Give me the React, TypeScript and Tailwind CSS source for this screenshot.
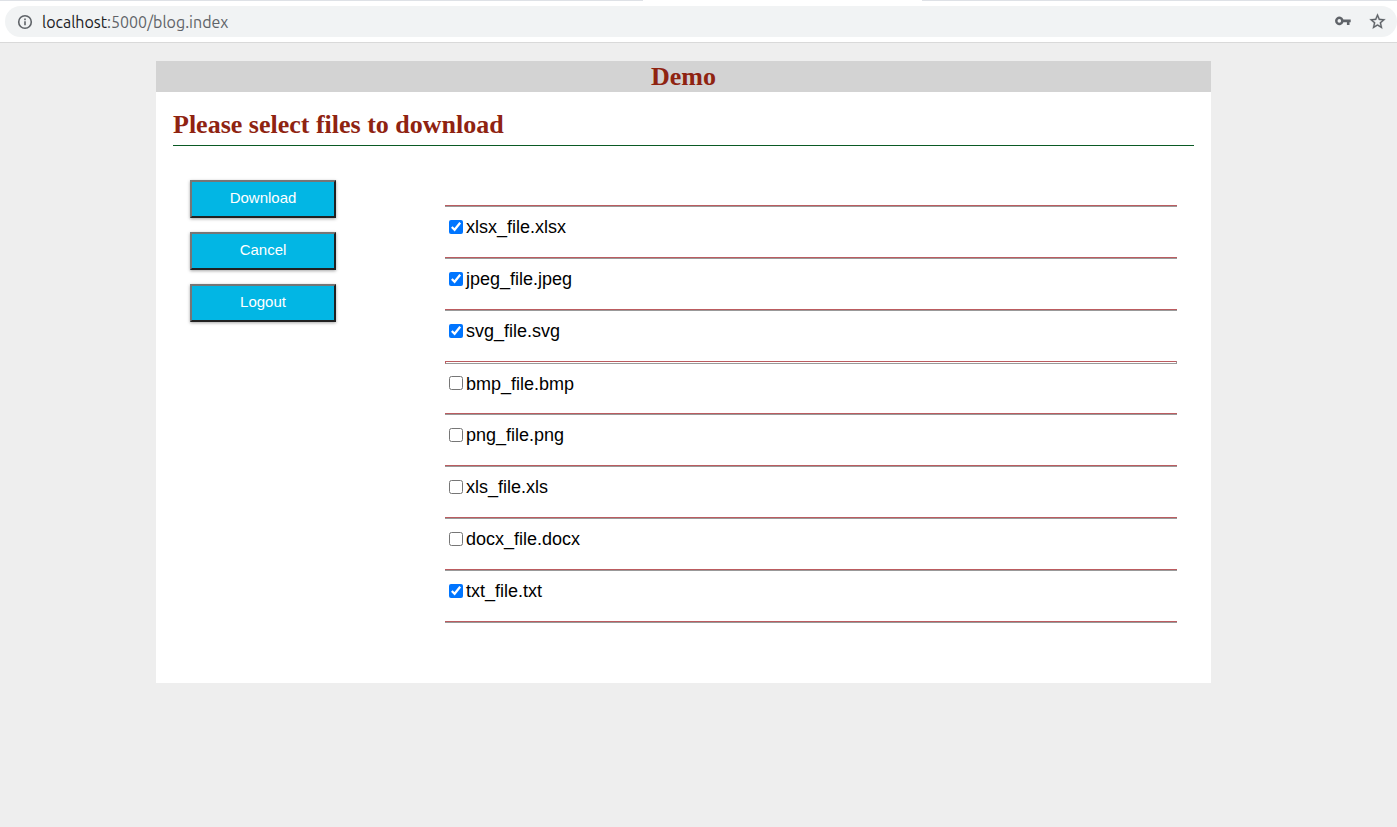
import { useState } from "react";

const initialFiles = [
  { name: "xlsx_file.xlsx", checked: true, openRule: false },
  { name: "jpeg_file.jpeg", checked: true, openRule: false },
  { name: "svg_file.svg", checked: true, openRule: false },
  { name: "bmp_file.bmp", checked: false, openRule: true },
  { name: "png_file.png", checked: false, openRule: false },
  { name: "xls_file.xls", checked: false, openRule: false },
  { name: "docx_file.docx", checked: false, openRule: false },
  { name: "txt_file.txt", checked: true, openRule: false },
];

const actions = ["Download", "Cancel", "Logout"];

function AddressBar() {
  return (
    <header className="border-b border-[#d9d9d9] bg-white">
      <div className="flex h-px justify-between">
        <div className="w-[46%] bg-[#dee1e6]" />
        <div className="w-[34%] bg-[#dee1e6]" />
      </div>
      <div className="pt-[5px] pb-[5px] pl-[5px]">
        <div className="flex h-[31px] items-center rounded-full bg-[#f1f3f4] pr-[10px] pl-3">
          <svg className="size-4" viewBox="0 0 16 16" fill="none" aria-hidden="true">
            <circle cx="8" cy="8" r="6.3" stroke="#5f6368" strokeWidth="1.6" />
            <path d="M7.2 7.2h1.6v4H7.2zM7.2 4.6h1.6v1.6H7.2z" fill="#5f6368" />
          </svg>
          <a
            href="#blog"
            className="ml-[9px] font-['Ubuntu','Noto_Sans',sans-serif] text-base leading-5 text-[#5f6368]"
          >
            <span className="text-[#202124]">localhost</span>:5000/blog.index
          </a>
          <div className="ml-auto flex items-center gap-4">
            <button type="button" aria-label="Saved passwords">
              <svg className="h-4 w-[18px]" viewBox="0 0 18 16" aria-hidden="true">
                <path
                  fill="#5f6368"
                  fillRule="evenodd"
                  d="M9.4 5.5h7.3v2.7h-1.2v2.9h-2.6V8.2H9.4a4.3 4.3 0 1 1 0-2.7zM5.3 5.1a1.8 1.8 0 1 0 0 3.6 1.8 1.8 0 0 0 0-3.6z"
                />
              </svg>
            </button>
            <button type="button" aria-label="Bookmark this page">
              <svg className="size-[19px]" viewBox="0 0 24 24" aria-hidden="true">
                <path
                  fill="#5f6368"
                  stroke="#5f6368"
                  strokeWidth="0.3"
                  d="M22 9.24l-7.19-.62L12 2 9.19 8.63 2 9.24l5.46 4.73L5.82 21 12 17.27 18.18 21l-1.63-7.03L22 9.24zM12 15.4l-3.76 2.27 1-4.28-3.32-2.88 4.38-.38L12 6.1l1.71 4.04 4.38.38-3.32 2.88 1 4.28L12 15.4z"
                />
              </svg>
            </button>
          </div>
        </div>
      </div>
    </header>
  );
}

function Rule({ open = false }: { open?: boolean }) {
  return (
    <div
      className={
        open
          ? "h-[3px] border border-t-[#bb5c60] border-r-[#999999] border-b-[#999999] border-l-[#bb5c60]"
          : "h-[2px] border-t border-b border-t-[#bb5c60] border-b-[#999999]"
      }
    />
  );
}

export default function App() {
  const [files, setFiles] = useState(initialFiles);

  const toggle = (name: string) =>
    setFiles((list) => list.map((f) => (f.name === name ? { ...f, checked: !f.checked } : f)));

  return (
    <div className="min-h-screen bg-[#eeeeee] font-['Liberation_Sans',Arial,sans-serif] text-black">
      <AddressBar />
      <main className="mt-[18px] mr-[186px] ml-[156px] bg-white pb-[60px]">
        <h1 className="bg-[#d3d3d3] text-center font-['Liberation_Serif',serif] text-[26px] leading-[31px] font-bold text-[#8f2311]">
          Demo
        </h1>
        <div className="px-[17px] pt-[17px]">
          <h2 className="border-b border-[#0a5a24] pb-[5px] font-['Liberation_Serif',serif] text-[26px] leading-[31px] font-bold text-[#8f2311]">
            Please select files to download
          </h2>
          <form className="flex px-[17px] pt-[34px]" onSubmit={(e) => e.preventDefault()}>
            <div className="mr-[109px] flex w-[146px] shrink-0 flex-col gap-[14px]">
              {actions.map((label) => (
                <button
                  key={label}
                  type="button"
                  className="h-[38px] border-2 border-t-[#767676] border-r-[#212121] border-b-[#212121] border-l-[#767676] bg-[#02b6e4] pb-[3px] text-[15px] leading-5 text-white shadow-[0_1px_3px_rgba(0,0,0,0.35)]"
                >
                  {label}
                </button>
              ))}
            </div>
            <div className="mt-[25px] grow">
              <ul>
                {files.map((file) => (
                  <li key={file.name} className="flex h-[52px] flex-col">
                    <Rule open={file.openRule} />
                    <div className="flex grow items-center pb-[10px] pl-1">
                      <label className="flex items-center gap-[3px] text-[18px] leading-5">
                        <input
                          type="checkbox"
                          className="mb-px size-[14px]"
                          checked={file.checked}
                          onChange={() => toggle(file.name)}
                        />
                        {file.name}
                      </label>
                    </div>
                  </li>
                ))}
              </ul>
              <Rule />
            </div>
          </form>
        </div>
      </main>
    </div>
  );
}
